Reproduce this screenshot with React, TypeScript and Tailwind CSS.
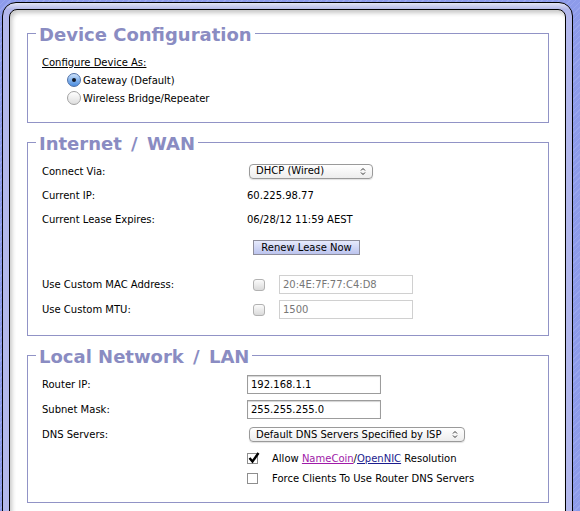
import type { ReactNode } from "react";

function Legend({ children }: { children: ReactNode }) {
  return (
    <legend className="px-[3px] pt-[4px] text-[18px] leading-[20px] font-bold text-[#8a8cc2]">
      {children}
    </legend>
  );
}

function Slash() {
  return <span className="mx-[3px]">/</span>;
}

function Row({ label, children, className = "h-[24px]" }: { label: string; children?: ReactNode; className?: string }) {
  return (
    <div className={`grid grid-cols-[205px_1fr] items-center ${className}`}>
      <span>{label}</span>
      <div className="flex items-center">{children}</div>
    </div>
  );
}

function Radio({ checked, label }: { checked?: boolean; label: string }) {
  return (
    <div className="flex h-[18px] items-center pl-[25px]">
      {checked ? (
        <span className="flex h-[14px] w-[14px] items-center justify-center rounded-full border border-[#4f71a8] bg-[linear-gradient(to_bottom,#cfe3fa,#7fb0ec_55%,#4d8ee0)]">
          <span className="h-[4px] w-[4px] rounded-full bg-[#111827]" />
        </span>
      ) : (
        <span className="h-[14px] w-[14px] rounded-full border border-[#a2a2a2] bg-[linear-gradient(to_bottom,#ffffff,#dedede)]" />
      )}
      <span className="ml-[2px]">{label}</span>
    </div>
  );
}

function Select({ width, children }: { width: string; children: ReactNode }) {
  return (
    <div
      className={`ml-[2px] flex h-[15px] items-center justify-between rounded-[4px] border border-[#9a9a9a] bg-[linear-gradient(to_bottom,#ffffff,#ededed)] pl-[6px] pr-[6px] shadow-[0_1px_1px_rgba(0,0,0,0.12)] ${width}`}
    >
      <span className="leading-none">{children}</span>
      <svg width="6" height="9" viewBox="0 0 6 9" fill="none" stroke="#333" strokeWidth="1">
        <path d="M1 3.5 L3 1.5 L5 3.5" />
        <path d="M1 5.5 L3 7.5 L5 5.5" />
      </svg>
    </div>
  );
}

function WanOption({ label, value }: { label: string; value: string }) {
  return (
    <Row label={label} className="h-[25px]">
      <span className="ml-[6px] h-[12px] w-[12px] rounded-[3px] border border-[#b2b2b2] bg-[linear-gradient(to_bottom,#fbfbfb,#dadada)]" />
      <input
        readOnly
        value={value}
        className="ml-[14px] h-[19px] w-[134px] border border-[#d0d0d0] bg-white px-[3px] text-[#777777] outline-none"
      />
    </Row>
  );
}

function LanInput({ label, value }: { label: string; value: string }) {
  return (
    <Row label={label} className="h-[25px]">
      <input
        readOnly
        value={value}
        className="h-[19px] w-[134px] border border-[#9c9c9c] bg-white px-[3px] shadow-[inset_0_1px_1px_rgba(0,0,0,0.18)] outline-none"
      />
    </Row>
  );
}

function Checkbox({ checked }: { checked?: boolean }) {
  return (
    <span className="relative h-[11px] w-[11px] border border-[#8e8e8e] bg-white">
      {checked && (
        <svg className="absolute -top-[2px] left-0" width="12" height="12" viewBox="0 0 12 12" fill="none">
          <path d="M1.5 6 L4.5 9.5 L10.5 1" stroke="#000" strokeWidth="2.4" />
        </svg>
      )}
    </span>
  );
}

export default function App() {
  return (
    <div className="h-[511px] w-[580px] overflow-hidden bg-[#8b99e9] bg-[repeating-linear-gradient(135deg,#8d9bea_0px,#8d9bea_3px,#99a6ef_3px,#99a6ef_4px)] pl-[2px] pt-[2px] font-['DejaVu_Sans',Verdana,sans-serif] text-[10px] text-black">
      <div className="w-[571px] rounded-t-[14px] border border-black bg-[linear-gradient(to_bottom,#e2e4f6,#aeb3e6_7px,#b3b8ec_7px)] px-[6px] pt-[6px]">
        <div className="rounded-t-[8px] border border-black bg-white pb-[20px] pl-[17px] pr-[16px] pt-[11px] shadow-[inset_2px_3px_4px_rgba(0,0,0,0.22)]">
          {/* Device Configuration */}
          <fieldset className="border border-[#9193c6] px-[8px] pb-[15px]">
            <Legend>Device Configuration</Legend>
            <div className="pl-[6px] pt-[8px]">
              <div className="flex h-[18px] items-center underline">Configure Device As:</div>
              <Radio checked label="Gateway (Default)" />
              <Radio label="Wireless Bridge/Repeater" />
            </div>
          </fieldset>

          {/* Internet / WAN */}
          <fieldset className="mt-[7px] border border-[#9193c6] px-[8px] pb-[13px]">
            <Legend>
              Internet <Slash /> WAN
            </Legend>
            <div className="pl-[6px] pt-[5px]">
              <Row label="Connect Via:">
                <Select width="w-[124px]">DHCP (Wired)</Select>
              </Row>
              <Row label="Current IP:">60.225.98.77</Row>
              <Row label="Current Lease Expires:">06/28/12 11:59 AEST</Row>
              <div className="mt-[9px] pl-[211px]">
                <button className="flex h-[15px] w-[107px] items-center justify-center border border-[#8e8e9c] bg-[linear-gradient(to_bottom,#e6eafc,#bcc4ee)] leading-none">
                  Renew Lease Now
                </button>
              </div>
              <div className="mt-[17px]">
                <WanOption label="Use Custom MAC Address:" value="20:4E:7F:77:C4:D8" />
                <WanOption label="Use Custom MTU:" value="1500" />
              </div>
            </div>
          </fieldset>

          {/* Local Network / LAN */}
          <fieldset className="mt-[7px] border border-[#9193c6] px-[8px] pb-[14px]">
            <Legend>
              Local Network <Slash /> LAN
            </Legend>
            <div className="pl-[6px] pt-[5px]">
              <LanInput label="Router IP:" value="192.168.1.1" />
              <LanInput label="Subnet Mask:" value="255.255.255.0" />
              <Row label="DNS Servers:" className="h-[25px]">
                <Select width="w-[216px]">Default DNS Servers Specified by ISP</Select>
              </Row>
              <Row label="" className="h-[22px]">
                <Checkbox checked />
                <span className="ml-[14px]">
                  Allow{" "}
                  <a className="text-[#a01aa8] underline">NameCoin</a>/
                  <a className="text-[#1c1c8e] underline">OpenNIC</a> Resolution
                </span>
              </Row>
              <Row label="" className="h-[19px]">
                <Checkbox />
                <span className="ml-[14px]">Force Clients To Use Router DNS Servers</span>
              </Row>
            </div>
          </fieldset>
        </div>
      </div>
    </div>
  );
}
